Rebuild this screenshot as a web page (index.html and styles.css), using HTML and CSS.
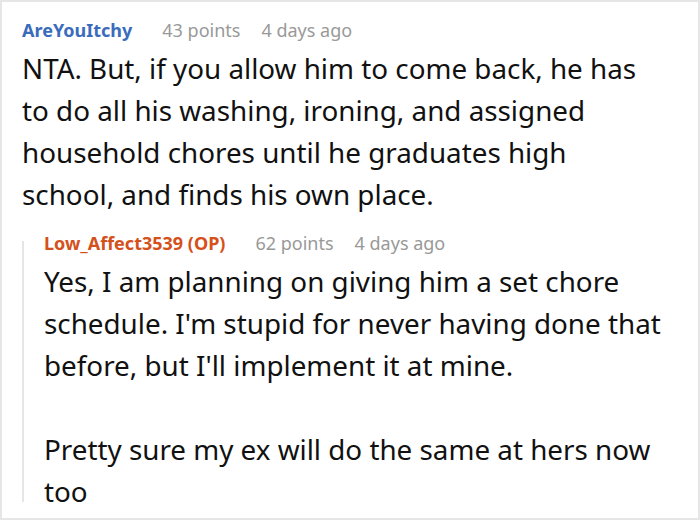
FILE: index.html
```html
<!DOCTYPE html>
<html>
<head>
<meta charset="utf-8">
<link rel="stylesheet" href="styles.css">
</head>
<body>
<div class="card">
  <div class="comment">
    <div class="meta">
      <span class="author">AreYouItchy</span>
      <span class="info">43 points</span>
      <span class="info">4 days ago</span>
    </div>
    <div class="text">
      <p>NTA. But, if you allow him to come back, he has to do all his washing, ironing, and assigned household chores until he graduates high school, and finds his own place.</p>
    </div>
  </div>
  <div class="reply">
    <div class="meta">
      <span class="author op">Low_Affect3539 (OP)</span>
      <span class="info">62 points</span>
      <span class="info">4 days ago</span>
    </div>
    <div class="text">
      <p>Yes, I am planning on giving him a set chore schedule. I'm stupid for never having done that before, but I'll implement it at mine.</p>
      <p>Pretty sure my ex will do the same at hers now too</p>
    </div>
  </div>
</div>
</body>
</html>
```
FILE: styles.css
```css
html, body {
  margin: 0;
  padding: 0;
  background: #ffffff;
}
.card {
  box-sizing: border-box;
  width: 700px;
  height: 520px;
  border: 2px solid #e6e6e6;
  padding: 14px 30px 0 20px;
  font-family: "Noto Sans", sans-serif;
  color: #111111;
  overflow: hidden;
}
.meta {
  font-size: 18px;
  line-height: 28px;
  display: flex;
}
.author {
  font-weight: bold;
  color: #3a6cbc;
  margin-right: 30px;
}
.author.op {
  color: #d4511b;
  margin-right: 30px;
}
.info {
  color: #999999;
  margin-right: 21px;
}
.text {
  margin-top: 3px;
  font-size: 27.8px;
  line-height: 42px;
}
.comment .text {
  padding-right: 10px;
}
.text p {
  margin: 0;
}
.text p + p {
  margin-top: 42px;
}
.reply {
  margin-top: 14px;
  border-left: 2px solid transparent;
  border-image: linear-gradient(to bottom, transparent 13px, #e6e6e6 13px, #e6e6e6 calc(100% - 11px), transparent calc(100% - 11px)) 1;
  padding-left: 20px;
}
.reply .text {
  margin-top: 3px;
}
```
